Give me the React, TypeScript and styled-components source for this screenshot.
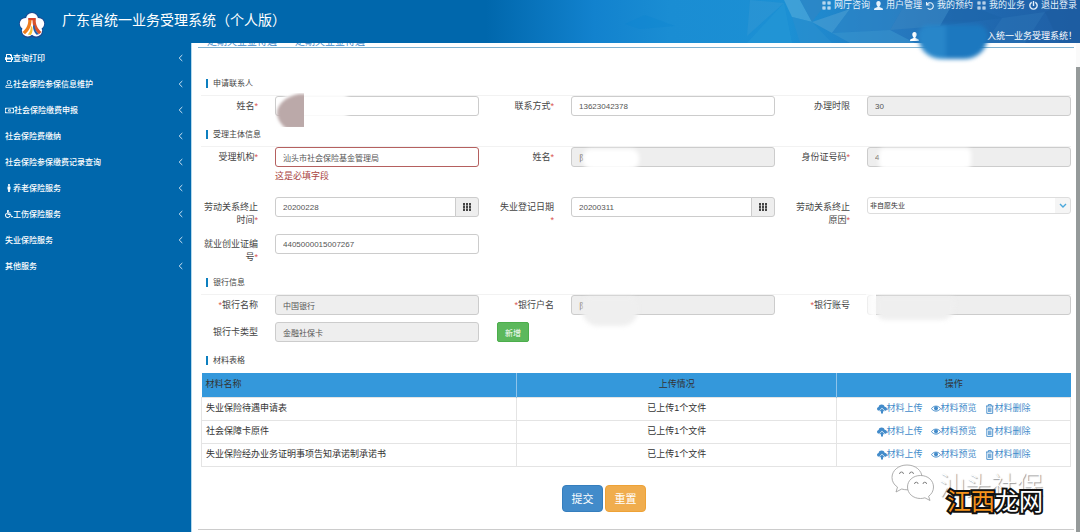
import React from "react";
import styled, { createGlobalStyle, css } from "styled-components";
import {
  FaPrint,
  FaRegUser,
  FaRegMoneyBillAlt,
  FaMale,
  FaWheelchair,
  FaUser,
  FaUndo,
  FaPowerOff,
} from "react-icons/fa";

const GlobalStyle = createGlobalStyle`
  *, *::before, *::after { box-sizing: border-box; }
  body {
    margin: 0;
    background: #fff;
    color: #444;
    font-family: "Liberation Sans", "Noto Sans CJK SC", sans-serif;
    font-size: 9px;
    line-height: 13px;
  }
  input, select, button { font-family: inherit; margin: 0; }
  a { text-decoration: none; }
`;

const Page = styled.div`
  display: flex;
  flex-direction: column;
  min-height: 100vh;
`;

/* ---------- header ---------- */

const Header = styled.header`
  position: relative;
  display: flex;
  justify-content: space-between;
  height: 43px;
  background: #0067ac;
  color: #fff;
`;

const Backdrop = styled.svg`
  position: absolute;
  inset: 0;
  width: 100%;
  height: 100%;
`;

const Brand = styled.div`
  position: relative;
  display: flex;
  align-items: flex-start;
  gap: 16px;
  padding: 10px 0 0 18px;
`;

const Title = styled.h1`
  margin: 0;
  font-size: 14px;
  line-height: 20px;
  font-weight: 400;
`;

const HeaderSide = styled.div`
  position: relative;
  display: flex;
  flex-direction: column;
  align-items: flex-end;
  justify-content: space-between;
  padding: 0 3px 0 0;
`;

const TopNav = styled.nav`
  display: flex;
  gap: 4px;
  line-height: 11px;
`;

const TopLink = styled.a`
  display: flex;
  align-items: center;
  gap: 3px;
  color: #e6f2fb;
  white-space: nowrap;
`;

const Welcome = styled.div`
  display: flex;
  align-items: center;
  gap: 68px;
  white-space: nowrap;
`;

const HeaderMask = styled.span`
  position: absolute;
  z-index: 2;
  right: 92px;
  top: 25px;
  width: 70px;
  height: 34px;
  border-radius: 12px 12px 26px 26px;
  background: linear-gradient(90deg, #2886c9 0 40%, #1c78bf 40%);
  filter: blur(2px);
`;

/* ---------- sidebar ---------- */

const Body = styled.div`
  display: flex;
  flex: 1;
`;

const Sidebar = styled.nav`
  flex: 0 0 191px;
  padding-top: 2px;
  background: #0067ac;
`;

const MenuList = styled.ul`
  list-style: none;
  margin: 0;
  padding: 0;
`;

const MenuLink = styled.a`
  display: flex;
  align-items: center;
  height: 26px;
  padding: 0 8px 0 5px;
  color: #fff;
  font-size: 8px;
  font-weight: 500;
`;

const MenuText = styled.span`
  flex: 1;
`;

/* ---------- content ---------- */

const Main = styled.main`
  flex: 1;
  min-width: 0;
  padding: 0 2px 0 6px;
  border-left: 1px solid #b5d9ec;
  background: #fff;
`;

const Crumbs = styled.div`
  display: flex;
  align-items: flex-end;
  gap: 18px;
  height: 5px;
  padding-left: 9px;
  overflow: hidden;
  border-bottom: 1px solid #7fb2d0;
  font-size: 10px;
  line-height: 11px;
  a { color: #428bca; }
`;

const Form = styled.form`
  padding: 24px 3px 0;
`;

const Section = styled.section`
  margin-bottom: 7px;
`;

const SectionTitle = styled.h2<{ $plain?: boolean }>`
  display: flex;
  align-items: center;
  gap: 5px;
  height: 24px;
  margin: 0;
  padding-left: 5px;
  border-bottom: 1px solid ${(p) => (p.$plain ? "transparent" : "#f2f2f2")};
  color: #444;
  font-size: 8px;
  font-weight: 400;
  &::before {
    content: "";
    width: 2px;
    height: 9px;
    background: #0d7fbf;
  }
`;

const Fields = styled.div`
  display: grid;
  grid-template-columns: repeat(3, 1fr);
  gap: 7px 18px;
  align-items: start;
`;

const FieldBox = styled.div`
  display: grid;
  grid-template-columns: 56px 1fr;
  column-gap: 17px;
  padding-left: 1px;
`;

const Label = styled.label`
  padding-top: 4px;
  text-align: right;
  color: #444;
`;

const Star = styled.span`
  color: #d9534f;
`;

const Control = styled.div`
  position: relative;
  min-width: 0;
`;

const boxed = css`
  width: 100%;
  border: 1px solid #ccc;
  border-radius: 3px;
  color: #555;
  font-size: 8px;
  outline: none;
`;

const Input = styled.input<{ $invalid?: boolean }>`
  ${boxed}
  display: block;
  height: 20px;
  padding: 0 7px;
  background: #fff;
  border-color: ${(p) => (p.$invalid ? "#b5605f" : "#ccc")};
  &:read-only { background: #eee; }
`;

const ErrorText = styled.p`
  margin: 0;
  padding: 3px 0 7px;
  color: #a94442;
`;

const DateGroup = styled.div`
  display: flex;
  ${Input} {
    flex: 1;
    min-width: 0;
    border-radius: 3px 0 0 3px;
  }
`;

const DateButton = styled.button`
  display: flex;
  align-items: center;
  justify-content: center;
  width: 24px;
  height: 20px;
  margin-left: -1px;
  padding: 0;
  border: 1px solid #ccc;
  border-radius: 0 3px 3px 0;
  background: #eee;
`;

const SelectWrap = styled.div`
  display: flex;
  position: relative;
`;

const Select = styled.select`
  ${boxed}
  appearance: none;
  height: 17px;
  padding: 0 2px;
  border-color: #ddd;
  font-size: 7px;
  color: #333;
  background: linear-gradient(#f5f5f5, #f5f5f5) right / 15px 100% no-repeat #fff;
`;

const SelectArrow = styled.svg`
  position: absolute;
  right: 4px;
  top: 6px;
  pointer-events: none;
`;

type MaskKind = "pink" | "white" | "wide" | "grey" | "greyWide";

const maskStyles = {
  pink: css`
    left: 10px;
    top: -2px;
    width: 62px;
    height: 24px;
    background: #fff;
    filter: blur(2px);
  `,
  white: css`
    left: 12px;
    top: 2px;
    width: 56px;
    height: 20px;
    border-radius: 8px;
    background: #fff;
    filter: blur(2px);
  `,
  wide: css`
    left: 12px;
    top: 1px;
    width: 92px;
    height: 21px;
    border-radius: 5px;
    background: #fff;
    filter: blur(2px);
  `,
  grey: css`
    left: 11px;
    top: 2px;
    width: 56px;
    height: 29px;
    border-radius: 8px 8px 16px 16px;
    background: #efefef;
    filter: blur(2px);
  `,
  greyWide: css`
    left: 10px;
    top: 2px;
    width: 78px;
    height: 23px;
    border-radius: 4px 4px 14px 8px;
    background: #efefef;
    filter: blur(2px);
  `,
};

const Mask = styled.span<{ $kind: MaskKind }>`
  position: absolute;
  ${(p) => maskStyles[p.$kind]}
`;

const SmudgeSvg = styled.svg`
  position: absolute;
  left: 0;
  top: -3px;
`;

const EdgeFade = styled.span`
  position: absolute;
  left: -1px;
  top: -1px;
  width: 10px;
  height: 22px;
  background: linear-gradient(90deg, rgba(255, 255, 255, 0.6), #fff);
`;

const AddButton = styled.button`
  justify-self: start;
  width: 32px;
  height: 20px;
  padding: 0;
  border: 1px solid #4cae4c;
  border-radius: 2px;
  background: #5cb85c;
  color: #fff;
  font-size: 8px;
`;

/* ---------- table ---------- */

const Table = styled.table`
  width: 100%;
  table-layout: fixed;
  border-collapse: collapse;
  border-bottom: 1px solid #ddd;
`;

const Th = styled.th<{ $left?: boolean; $width?: string }>`
  width: ${(p) => p.$width ?? "auto"};
  height: 24px;
  padding: 0 4px;
  border-left: ${(p) => (p.$left ? "0" : "1px solid #8ec3ea")};
  background: #3498db;
  color: #333;
  font-weight: 400;
  text-align: ${(p) => (p.$left ? "left" : "center")};
`;

const Td = styled.td<{ $left?: boolean }>`
  height: 23px;
  padding: 0 4px;
  border: 1px solid #e4e4e4;
  color: #333;
  text-align: ${(p) => (p.$left ? "left" : "center")};
`;

const Actions = styled.div`
  display: flex;
  justify-content: center;
  gap: 8px;
`;

const ActionLink = styled.a`
  display: flex;
  align-items: center;
  color: #428bca;
  white-space: nowrap;
  svg { width: 10px; height: 10px; }
`;

const Footer = styled.div`
  display: flex;
  justify-content: center;
  gap: 2px;
  padding: 18px 64px 17px 0;
`;

const FooterRule = styled.div`
  border-bottom: 1px solid #ccc;
`;

const FormButton = styled.button<{ $tone: "blue" | "orange" }>`
  width: 41px;
  height: 27px;
  padding: 0;
  border: 1px solid ${(p) => (p.$tone === "blue" ? "#357ebd" : "#eea236")};
  border-radius: 4px;
  background: ${(p) => (p.$tone === "blue" ? "#428bca" : "#f0ad4e")};
  color: #fff;
  font-size: 11px;
`;

const ScrollTrack = styled.div`
  flex: 0 0 4px;
  display: flex;
  padding-top: 24px;
  background: #fafafa;
`;

const ScrollThumb = styled.div`
  flex: 1;
  background: #959a9a;
`;

/* ---------- watermark ---------- */

const Watermark = styled.div`
  position: absolute;
  right: 34px;
  top: 463px;
  width: 156px;
  height: 54px;
  pointer-events: none;
`;

const WechatMark = styled.svg`
  position: absolute;
  left: 0;
  top: 0;
`;

const GhostText = styled.span`
  position: absolute;
  left: 49px;
  top: 8px;
  color: #fff;
  font-size: 26px;
  line-height: 30px;
  font-weight: 300;
  white-space: nowrap;
  text-shadow: 1px 1px 1px #999;
`;

const SiteText = styled.span`
  position: absolute;
  left: 57px;
  top: 24px;
  color: #fff;
  font-size: 24px;
  line-height: 30px;
  white-space: nowrap;
  -webkit-text-stroke: 4px #111;
  paint-order: stroke fill;
`;

const Orange = styled.span`
  color: #f7941d;
`;

/* ---------- drawings ---------- */

const HeaderArt = () => (
  <Backdrop viewBox="0 0 1080 43" preserveAspectRatio="none" aria-hidden="true">
    <defs>
      <linearGradient id="sky" x1="0" x2="1" y1="0" y2="0">
        <stop offset="0.45" stopColor="#0067ac" />
        <stop offset="0.55" stopColor="#1282ce" />
        <stop offset="0.62" stopColor="#1a8dd3" />
        <stop offset="0.73" stopColor="#1c90d4" />
        <stop offset="0.83" stopColor="#2679bf" />
        <stop offset="0.93" stopColor="#1f66ad" />
        <stop offset="1" stopColor="#205fa5" />
      </linearGradient>
    </defs>
    <rect width="1080" height="43" fill="url(#sky)" />
    <polygon points="625,24 645,15 675,26 640,29" fill="#0a84cf" opacity="0.3" />
    <polygon points="747,43 784,3 792,43" fill="#2b9ad6" opacity="0.4" />
    <polygon points="750,0 784,3 747,36" fill="#4a9fd2" opacity="0.25" />
    <polygon points="784,0 800,0 812,22 792,17" fill="#55abda" opacity="0.6" />
    <polygon points="800,0 829,0 812,22" fill="#2f86c4" opacity="0.7" />
    <polygon points="792,17 812,22 832,43 800,43" fill="#2a8fcf" opacity="0.7" />
    <polygon points="812,22 850,9 832,33" fill="#4c9fd2" opacity="0.6" />
    <polygon points="850,9 905,4 890,30 832,33" fill="#2d86c6" opacity="0.6" />
    <polygon points="832,33 890,30 915,43 850,43" fill="#3a94cd" opacity="0.6" />
    <polygon points="905,4 955,0 940,26 890,30" fill="#3b87c2" opacity="0.5" />
    <polygon points="955,0 1002,18 940,26" fill="#1d64a9" opacity="0.6" />
    <polygon points="1002,18 1045,12 1025,43 985,43" fill="#2c74b5" opacity="0.5" />
    <polygon points="1045,12 1080,0 1080,43 1060,43" fill="#1c5ba0" opacity="0.6" />
  </Backdrop>
);

const Logo = () => (
  <svg width="28" height="31" viewBox="0 0 28 31" aria-hidden="true">
    <g fill="#1d4b93">
      <circle cx="14" cy="9" r="7" />
      <circle cx="7.6" cy="13.5" r="6.6" />
      <circle cx="20.4" cy="13.5" r="6.6" />
      <circle cx="10" cy="21" r="7" />
      <circle cx="18" cy="21" r="7" />
    </g>
    <g fill="#fff">
      <circle cx="14" cy="9" r="6" />
      <circle cx="7.6" cy="13.7" r="5.8" />
      <circle cx="20.4" cy="13.7" r="5.8" />
      <circle cx="9.8" cy="20.6" r="5.9" />
      <circle cx="18.2" cy="20.6" r="5.9" />
      <circle cx="14" cy="15.5" r="6" />
    </g>
    <path d="M10.200 8h7.600v2.200h-7.600z" fill="#d9432b" />
    <path d="M10.300 10h3.200c0 6-2 10.500-6.500 14.200L4.500 22C8.500 18.500 10.300 15 10.300 10z" fill="#ee7d1c" />
    <path d="M14.500 10h3.200c0 5 1.800 8.500 5.800 12L21 24.200C16.500 20.500 14.500 16 14.500 10z" fill="#d9532b" />
    <path d="M12.800 15.500c.3 3.500-.8 6.500-3 9l3 .4c1.500-2 2-4.500 1.600-7.500z" fill="#f6c236" />
    <path d="M15 15.500c-.2 3.600 1 6.700 3.600 9.300l2.300-.5c-3-2.800-4.300-5.600-4.400-9z" fill="#2560ab" />
  </svg>
);

const QrIcon = () => (
  <svg width="9" height="9" viewBox="0 0 9 9" fill="none" stroke="currentColor" aria-hidden="true">
    <rect x="1" y="1" width="2" height="2" />
    <rect x="6" y="1" width="2" height="2" />
    <rect x="1" y="6" width="2" height="2" />
    <rect x="6" y="6" width="2" height="2" />
  </svg>
);

const PersonIcon = () => (
  <svg width="9" height="9" viewBox="0 0 9 9" fill="currentColor" aria-hidden="true">
    <path d="M4.500 0C3 0 2.300 1 2.300 2.400c0 1.200.5 2.200 1.200 2.800v.8L.6 7.200C.2 7.400 0 8 0 9h9c0-1-.2-1.600-.6-1.800L5.500 6v-.8c.7-.6 1.200-1.600 1.200-2.800C6.700 1 6 0 4.500 0z" />
  </svg>
);

const Chevron = () => (
  <svg width="5" height="8" viewBox="0 0 5 8" fill="none" stroke="#cfe3f2" aria-hidden="true">
    <path d="M4.300 1L1.200 4l3.100 3" />
  </svg>
);

const GridIcon = () => (
  <svg width="9" height="8" viewBox="0 0 9 8" fill="#444" aria-hidden="true">
    {[0, 3, 6].map((x) => (
      <React.Fragment key={x}>
        <path d={`M${x} 0h2v8h-2z`} opacity="0.6" />
        <path d={`M${x} 0h2v2h-2zM${x} 3h2v2h-2zM${x} 6h2v2h-2z`} />
      </React.Fragment>
    ))}
  </svg>
);

const UploadIcon = () => (
  <svg viewBox="0 0 10 10" fill="currentColor" aria-hidden="true">
    <path d="M2.200 6.800C.9 6.700 0 5.900 0 4.800c0-1 .7-1.700 1.600-1.900C1.900 1.400 3.100.6 4.600.6c1.600 0 2.700.9 3 2.200C9 2.900 10 3.700 10 4.900c0 1.100-.8 1.900-2.100 1.900L5 3.700z" />
    <path d="M5 4.400l2.600 2.800H6v2.200H4V7.200H2.400z" />
  </svg>
);

const EyeIcon = () => (
  <svg viewBox="0 0 10 10" aria-hidden="true">
    <path d="M.5 4.600C2.500 1.300 7.500 1.300 9.500 4.600 7.500 7.900 2.500 7.900.5 4.600z" fill="none" stroke="currentColor" />
    <circle cx="5" cy="4.200" r="2" fill="currentColor" />
  </svg>
);

const TrashIcon = () => (
  <svg viewBox="0 0 10 10" fill="none" stroke="currentColor" strokeWidth="0.900" aria-hidden="true">
    <path d="M1 2h7.500M3.300 2V.6h2.900V2M1.800 2v7.400h5.900V2M3.700 3.600v4.400M4.800 3.600v4.400M5.900 3.600v4.400" />
  </svg>
);

/* ---------- pieces ---------- */

interface FieldProps {
  id: string;
  label: string;
  required?: "before" | "after";
  value?: string;
  readOnly?: boolean;
  error?: string;
  date?: boolean;
  options?: string[];
  mask?: MaskKind;
}

const Field = ({ id, label, required, value = "", readOnly, error, date, options, mask }: FieldProps) => {
  const input = <Input id={id} defaultValue={value} readOnly={readOnly} $invalid={!!error} />;
  return (
    <FieldBox>
      <Label htmlFor={id}>
        {required === "before" && <Star>*</Star>}
        {label}
        {required === "after" && <Star>*</Star>}
      </Label>
      <Control>
        {options ? (
          <SelectWrap>
            <Select id={id}>
              {options.map((o) => (
                <option key={o}>{o}</option>
              ))}
            </Select>
            <SelectArrow width="8" height="6" viewBox="0 0 8 6" fill="none" stroke="#4aa8dc" strokeWidth="1.400">
              <path d="M1 1l3 3 3-3" />
            </SelectArrow>
          </SelectWrap>
        ) : date ? (
          <DateGroup>
            {input}
            <DateButton type="button" aria-label={`选择${label}`}>
              <GridIcon />
            </DateButton>
          </DateGroup>
        ) : (
          input
        )}
        {error && <ErrorText>{error}</ErrorText>}
        {mask === "greyWide" && <EdgeFade />}
        {mask && <Mask $kind={mask} />}
        {mask === "pink" && (
          <SmudgeSvg width="29" height="34" viewBox="0 0 29 34" aria-hidden="true">
            <defs>
              <filter id="soft" x="-20%" y="-20%" width="140%" height="140%">
                <feGaussianBlur stdDeviation="1.500" />
              </filter>
            </defs>
            <path d="M40 1H24C12 3 3 10 2 19c0 7 4 13 10 17h28z" fill="#bba9a9" filter="url(#soft)" />
          </SmudgeSvg>
        )}
      </Control>
    </FieldBox>
  );
};

const topLinks = [
  { text: "网厅咨询", icon: <QrIcon /> },
  { text: "用户管理", icon: <PersonIcon /> },
  { text: "我的预约", icon: <FaUndo size={8} /> },
  { text: "我的业务", icon: <QrIcon /> },
  { text: "退出登录", icon: <FaPowerOff size={9} /> },
];

const menu = [
  { text: "查询打印", icon: <FaPrint size={8} /> },
  { text: "社会保险参保信息维护", icon: <FaRegUser size={8} /> },
  { text: "社会保险缴费申报", icon: <FaRegMoneyBillAlt size={9} /> },
  { text: "社会保险费缴纳" },
  { text: "社会保险参保缴费记录查询" },
  { text: "养老保险服务", icon: <FaMale size={8} /> },
  { text: "工伤保险服务", icon: <FaWheelchair size={8} /> },
  { text: "失业保险服务" },
  { text: "其他服务" },
];

const materials = ["失业保险待遇申请表", "社会保障卡原件", "失业保险经办业务证明事项告知承诺制承诺书"];

export default function App() {
  return (
    <>
      <GlobalStyle />
      <Page>
        <Header>
          <HeaderArt />
          <Brand>
            <Logo />
            <Title>广东省统一业务受理系统（个人版）</Title>
          </Brand>
          <HeaderSide>
            <TopNav>
              {topLinks.map((l) => (
                <TopLink href="#" key={l.text}>
                  {l.icon}
                  {l.text}
                </TopLink>
              ))}
            </TopNav>
            <Welcome>
              <PersonIcon />
              <span>入统一业务受理系统！</span>
            </Welcome>
          </HeaderSide>
          <HeaderMask />
        </Header>

        <Body>
          <Sidebar>
            <MenuList>
              {menu.map((m) => (
                <li key={m.text}>
                  <MenuLink href="#">
                    {m.icon}
                    <MenuText>{m.text}</MenuText>
                    <Chevron />
                  </MenuLink>
                </li>
              ))}
            </MenuList>
          </Sidebar>

          <Main>
            <Crumbs>
              <a href="#">定期失业金待遇</a>
              <a href="#">定期失业金待遇</a>
            </Crumbs>

            <Form onSubmit={(e) => e.preventDefault()}>
              <Section>
                <SectionTitle>申请联系人</SectionTitle>
                <Fields>
                  <Field id="contact" label="姓名" required="after" mask="pink" />
                  <Field id="phone" label="联系方式" required="after" value="13623042378" />
                  <Field id="limit" label="办理时限" value="30" readOnly />
                </Fields>
              </Section>

              <Section>
                <SectionTitle>受理主体信息</SectionTitle>
                <Fields>
                  <Field id="agency" label="受理机构" required="after" value="汕头市社会保险基金管理局" error="这是必填字段" />
                  <Field id="name" label="姓名" required="after" value="阝" readOnly mask="white" />
                  <Field id="idno" label="身份证号码" required="after" value="4" readOnly mask="wide" />
                  <Field id="endDate" label="劳动关系终止时间" required="after" value="20200228" date />
                  <Field id="regDate" label="失业登记日期" required="after" value="20200311" date />
                  <Field id="reason" label="劳动关系终止原因" required="after" options={["非自愿失业"]} />
                  <Field id="cert" label="就业创业证编号" required="after" value="4405000015007267" />
                </Fields>
              </Section>

              <Section>
                <SectionTitle>银行信息</SectionTitle>
                <Fields>
                  <Field id="bank" label="银行名称" required="before" value="中国银行" readOnly />
                  <Field id="holder" label="银行户名" required="before" value="阝" readOnly mask="grey" />
                  <Field id="account" label="银行账号" required="before" readOnly mask="greyWide" />
                  <Field id="card" label="银行卡类型" value="金融社保卡" readOnly />
                  <AddButton type="button">新增</AddButton>
                </Fields>
              </Section>

              <SectionTitle $plain>材料表格</SectionTitle>
              <Table>
                <thead>
                  <tr>
                    <Th $left $width="36.300%">材料名称</Th>
                    <Th $width="36.800%">上传情况</Th>
                    <Th>操作</Th>
                  </tr>
                </thead>
                <tbody>
                  {materials.map((m) => (
                    <tr key={m}>
                      <Td $left>{m}</Td>
                      <Td>已上传1个文件</Td>
                      <Td>
                        <Actions>
                          <ActionLink href="#"><UploadIcon />材料上传</ActionLink>
                          <ActionLink href="#"><EyeIcon />材料预览</ActionLink>
                          <ActionLink href="#"><TrashIcon />材料删除</ActionLink>
                        </Actions>
                      </Td>
                    </tr>
                  ))}
                </tbody>
              </Table>

              <Footer>
                <FormButton type="submit" $tone="blue">提交</FormButton>
                <FormButton type="reset" $tone="orange">重置</FormButton>
              </Footer>
            </Form>
            <FooterRule />
          </Main>

          <ScrollTrack>
            <ScrollThumb />
          </ScrollTrack>
        </Body>

        <Watermark>
          <WechatMark width="46" height="40" viewBox="0 0 46 40" fill="#fff" stroke="#999" strokeWidth="0.800">
            <path d="M17 2C8.500 2 2 7.500 2 14.500c0 4 2 7.300 5.500 9.600L6 29l5.700-3c1.700.5 3.500.8 5.300.8C25.500 26.800 32 21.500 32 14.500S25.500 2 17 2z" />
            <path d="M30.500 12.500C23 12.500 17.500 17.500 17.500 24s5.500 11.500 13 11.500c1.500 0 3-.2 4.400-.7l5.100 2.700-1.400-4.200c3-2.200 4.900-5.400 4.900-9.300 0-6.500-5.500-11.500-13-11.500z" />
            <path d="M9.500 11a2 2 0 0 1 4 0M19.500 11a2 2 0 0 1 4 0M24.500 21a1.800 1.800 0 0 1 3.600 0M33 21a1.800 1.800 0 0 1 3.600 0" fill="none" stroke="#666" />
          </WechatMark>
          <GhostText>汕头社保</GhostText>
          <SiteText>
            <Orange>江西</Orange>龙网
          </SiteText>
        </Watermark>
      </Page>
    </>
  );
}
